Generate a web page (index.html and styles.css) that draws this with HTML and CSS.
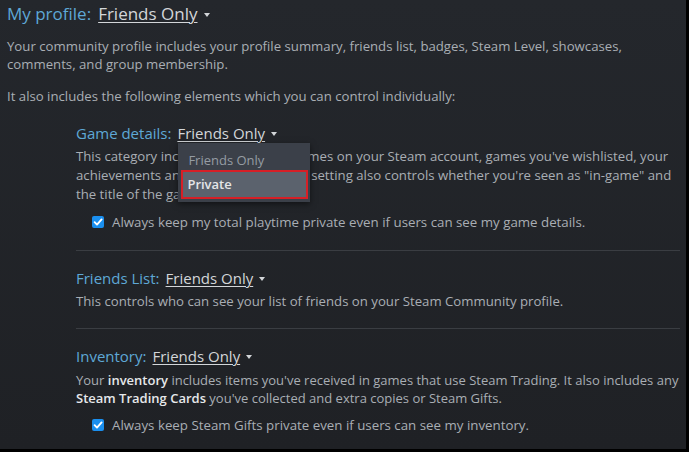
FILE: index.html
```html
<!DOCTYPE html>
<html>
<head>
<meta charset="utf-8">
<link rel="stylesheet" href="styles.css">
</head>
<body>
<div class="frame">
  <div class="page">
    <div class="profile-head">
      <span class="label big">My profile:</span>
      <span class="select big-select">Friends Only</span><span class="caret"></span>
    </div>
    <p class="text">Your community profile includes your profile summary, friends list, badges, Steam Level, showcases,<br>comments, and group membership.</p>
    <p class="text gap">It also includes the following elements which you can control individually:</p>

    <div class="group first">
      <div class="row-head">
        <span class="label">Game details:</span>
        <span class="select-wrap">
          <span class="select">Friends Only</span><span class="caret"></span>
          <div class="menu">
            <div class="menu-item">Friends Only</div>
            <div class="menu-item active">Private</div>
          </div>
        </span>
      </div>
      <p class="text desc">This category includes the list of all games on your Steam account, games you've wishlisted, your<br>achievements and your playtime. This setting also controls whether you're seen as "in-game" and<br>the title of the game you're playing.</p>
      <label class="check"><span class="box"><svg viewBox="0 0 12 12" width="12" height="12"><path d="M2.6 6.2 L5 8.6 L9.6 3.4" fill="none" stroke="#fff" stroke-width="1.9" stroke-linecap="round" stroke-linejoin="round"/></svg></span>Always keep my total playtime private even if users can see my game details.</label>
    </div>

    <div class="group sep">
      <div class="row-head">
        <span class="label">Friends List:</span>
        <span class="select">Friends Only</span><span class="caret"></span>
      </div>
      <p class="text desc">This controls who can see your list of friends on your Steam Community profile.</p>
    </div>

    <div class="group sep sep-after-text">
      <div class="row-head">
        <span class="label">Inventory:</span>
        <span class="select">Friends Only</span><span class="caret"></span>
      </div>
      <p class="text desc tight">Your <b>inventory</b> includes items you've received in games that use Steam Trading. It also includes any<br><b>Steam Trading Cards</b> you've collected and extra copies or Steam Gifts.</p>
      <label class="check"><span class="box"><svg viewBox="0 0 12 12" width="12" height="12"><path d="M2.6 6.2 L5 8.6 L9.6 3.4" fill="none" stroke="#fff" stroke-width="1.9" stroke-linecap="round" stroke-linejoin="round"/></svg></span>Always keep Steam Gifts private even if users can see my inventory.</label>
    </div>
  </div>
</div>
</body>
</html>
```

FILE: styles.css
```css
html, body {
  margin: 0;
  padding: 0;
  background: #000;
}
body {
  width: 689px;
  height: 452px;
  overflow: hidden;
  font-family: "Open Sans", "Noto Sans", "Liberation Sans", sans-serif;
}
.frame {
  width: 686px;
  height: 449px;
  background: linear-gradient(#24272c, #1f2125);
  overflow: hidden;
}
.page {
  padding: 0 0 0 7px;
}
.profile-head {
  height: 27px;
  display: flex;
  align-items: center;
  gap: 7px;
}
.label {
  color: #5ea8d6;
  font-size: 15px;
}
.label.big {
  font-size: 17px;
}
.select {
  color: #d3d6d9;
  font-size: 15px;
  text-decoration: underline;
  text-underline-offset: 2px;
  text-decoration-thickness: 1px;
}
.big-select {
  font-size: 17px;
}
.caret {
  display: inline-block;
  width: 0;
  height: 0;
  border-left: 3.5px solid transparent;
  border-right: 3.5px solid transparent;
  border-top: 4px solid #d3d6d9;
  vertical-align: middle;
}
.profile-head .caret { margin-left: -1px; margin-top: 3px; }
.text {
  margin: 0;
  color: #a9aeb4;
  font-size: 13.2px;
  line-height: 18px;
  white-space: nowrap;
}
.profile-head + .text { margin-top: 10px; }
.text.gap { margin-top: 14px; }
.text b {
  color: #e6e8ea;
  font-weight: 600;
}
.group {
  margin-left: 69px;
  margin-right: 6px;
  position: relative;
}
.group.first { margin-top: 17px; }
.group.sep {
  border-top: 1px solid #3a3d42;
  margin-top: 19px;
  padding-top: 16px;
}
.group.sep-after-text { margin-top: 17px; }
.row-head {
  display: flex;
  align-items: center;
  gap: 6px;
  height: 22px;
  position: relative;
  z-index: 2;
}
.row-head .caret { margin-top: 2px; }
.select-wrap {
  position: relative;
  display: inline-flex;
  align-items: center;
  gap: 6px;
}
.desc {
  margin-top: 3px;
  line-height: 19px;
}
.desc.tight {
  margin-top: 4px;
  line-height: 18px;
  font-size: 13px;
}
.check {
  display: flex;
  align-items: center;
  margin: 9px 0 0 16px;
  color: #a9aeb4;
  font-size: 13.3px;
  gap: 8px;
}
.box {
  width: 12px;
  height: 12px;
  border-radius: 2px;
  background: #1a8fef;
  display: inline-flex;
}
.menu {
  position: absolute;
  left: 1px;
  top: 20px;
  width: 132px;
  height: 59px;
  background: #3b4049;
  box-shadow: 0 2px 6px rgba(0,0,0,0.5);
  box-sizing: border-box;
}
.menu-item {
  font-size: 13px;
  color: #959ca3;
  padding: 6px 0 0 10px;
  height: 27px;
  line-height: 22px;
  box-sizing: border-box;
}
.menu-item.active {
  margin: 0 2px 0 3px;
  height: 29px;
  line-height: 25px;
  padding: 0 0 0 4px;
  border: 2px solid #d61f26;
  background: #5b626d;
  color: #e4e6e8;
  font-weight: 600;
}
```
